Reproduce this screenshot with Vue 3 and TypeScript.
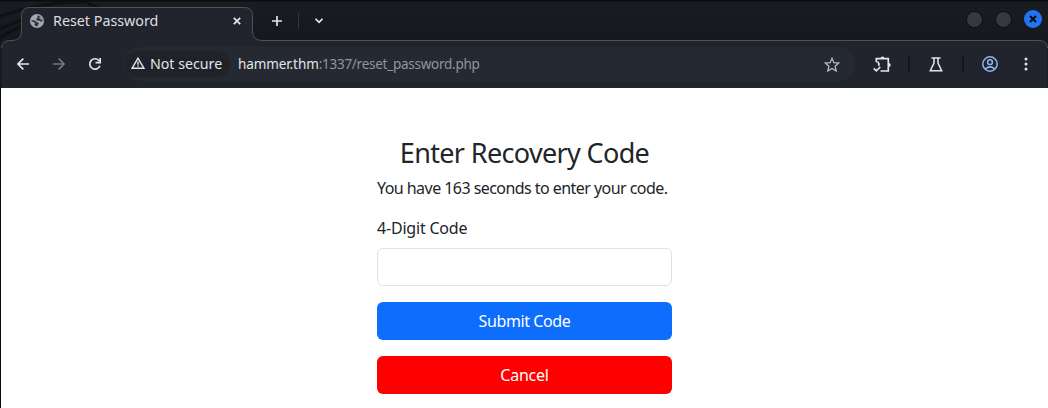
<script setup lang="ts">
import { ref } from 'vue'

const seconds = ref(163)
const code = ref('')
</script>

<template>
  <div class="window">
    <header class="browser">
      <svg class="frame" width="1048" height="88" viewBox="0 0 1048 88" fill="none">
        <path d="M0 38C14 27 18 30 29 22M0 16Q45 1 86 2L100 9M0 29L23 19" stroke="#0f1115" stroke-width="3" />
        <path d="M1.5 88V49Q1.5 40.5 10 40.5H12Q21.5 40.5 21.5 31V15.500Q21.500 7.500 29.500 7.500H244.500Q252.500 7.500 252.500 15.500V31Q252.500 40.500 262 40.500H1039Q1047.500 40.500 1047.500 49V88Z" fill="#21242c" />
        <path d="M1.5 48Q2 40.500 10 40.500H12Q21.500 40.500 21.500 31V15.500Q21.500 7.500 29.500 7.500H244.500Q252.500 7.500 252.500 15.500V31Q252.500 40.500 262 40.500H1039Q1047 40.500 1047.500 48" stroke="#505257" />
      </svg>
      <div class="tabs">
        <svg class="globe" width="14" height="14" viewBox="0 0 14 14">
          <circle cx="7" cy="7" r="7" fill="#a2a8b1" />
          <path d="M7.300 1.500Q10.500 1.500 12.300 5L12.500 7.200 11 7.800 9.500 6.800 7.300 6.800 6 5.200 7.600 3.800ZM1.500 6.300L4 6.300 7.200 8.300 9 9.200 8.300 10.500 7 12.500Q4.500 12.200 4.300 10.500L5.300 9.500 3.700 8 1.500 7.500Z" fill="#30343c" />
          <path d="M9.500 3.200l2.300 2.300" stroke="#a2a8b1" stroke-width="1.300" />
        </svg>
        <span class="tab-title">Reset Password</span>
        <svg class="close" width="8" height="8" viewBox="0 0 8 8"><path d="M.8.8l6.400 6.400M7.200.8L.8 7.200" /></svg>
        <svg class="plus" width="10" height="10" viewBox="0 0 10 10"><path d="M5 0v10M0 5h10" /></svg>
        <i class="tab-divider"></i>
        <svg class="chevron" width="8" height="6" viewBox="0 0 8 6"><path d="M.5.8L4 4.300 7.500.8" /></svg>
        <div class="controls">
          <i class="control"></i><i class="control"></i>
          <i class="control quit"><svg width="8" height="8" viewBox="0 0 8 8"><path d="M1 1l6 6M7 1L1 7" /></svg></i>
        </div>
      </div>
      <div class="toolbar">
        <svg class="back" width="12" height="12" viewBox="0 0 12 12"><path d="M12 6H1M6.300.7L1 6l5.300 5.300" /></svg>
        <svg class="forward" width="12" height="12" viewBox="0 0 12 12"><path d="M0 6h11M5.700.7L11 6l-5.300 5.300" /></svg>
        <svg class="reload" width="14" height="14" viewBox="0 0 14 14"><path d="M11.900 8.700A5.200 5.200 0 1 1 11.300 4M12.200 1v4.700H7.500" /></svg>
        <div class="address">
          <div class="security">
            <svg width="14" height="12" viewBox="0 0 14 12"><path d="M7 1.200L1.200 11.200h11.600zM7 4.500v3.200M7 8.500v1.300" /></svg>
            <span>Not secure</span>
          </div>
          <span class="url"><b>hammer.thm</b>:1337/reset_password.php</span>
          <svg class="star" width="16" height="15" viewBox="0 0 16 15"><path d="M8 1.300l1.900 4.400 4.800.4-3.600 3.200 1.100 4.600L8 11.400l-4.200 2.500 1.100-4.600-3.600-3.200 4.800-.4z" /></svg>
        </div>
        <svg class="extension" width="18" height="17" viewBox="0 0 18 17"><path d="M3.300 6V2.700h12V15H7.500M3.300 5.500C6 6 6.500 8.500 5.500 10M.8 12.300l2.500 2.500L7.300 11" /><path d="M7.500 2.500a2 2 0 0 1 4 0zM15.700 7a2 2 0 0 1 0 4z" fill="#e4e5e7" stroke="none" /></svg>
        <i class="divider"></i>
        <svg class="flask" width="14" height="15" viewBox="0 0 14 15"><path d="M2.500 1h9M5 1v5L1.300 13.700h11.400L9 6V1" /></svg>
        <i class="divider second"></i>
        <svg class="profile" width="16" height="16" viewBox="0 0 16 16"><circle cx="8" cy="8" r="7.200" /><circle cx="8" cy="6.200" r="2.400" /><path d="M3.300 13Q8 8.800 12.700 13" /></svg>
        <svg class="menu" width="4" height="14" viewBox="0 0 4 14"><circle cx="2" cy="2" r="1.500" /><circle cx="2" cy="7" r="1.500" /><circle cx="2" cy="12" r="1.500" /></svg>
      </div>
    </header>
    <main>
      <form @submit.prevent>
        <h1>Enter Recovery Code</h1>
        <p>You have {{ seconds }} seconds to enter your code.</p>
        <label for="code">4-Digit Code</label>
        <input id="code" v-model="code" type="text" />
        <button class="submit" type="submit">Submit Code</button>
        <button class="cancel" type="button">Cancel</button>
      </form>
    </main>
  </div>
</template>

<style>
body { margin: 0; background: #fff; overflow: hidden; }
</style>

<style scoped>
* { box-sizing: border-box; }
.window { width: 1048px; height: 408px; font-family: "Noto Sans", sans-serif; color: #212529; background: #fff; border-left: 1px solid #08090c; }
.browser { height: 88px; margin-left: -1px; position: relative; background: linear-gradient(#0a0c10 0, #0a0c10 1px, #191c21 2px, #15181c 41px); border-bottom: 1px solid #08090c; }
.frame { position: absolute; left: 0; top: 0; }
svg { display: block; flex: none; fill: none; stroke: #e4e5e7; stroke-width: 1.7; }
.frame, .globe { stroke: none; stroke-width: 1; }
.tabs { position: relative; height: 41px; display: flex; align-items: center; padding-left: 30px; white-space: nowrap; }
.tab-title { margin-left: 9px; width: 106px; color: #dedfe1; font-size: 14.3px; line-height: 20px; }
.close { margin-left: 74px; }
.plus { margin-left: 31px; }
.tab-divider { width: 1px; height: 16px; background: #33363c; margin-left: 16px; }
.chevron { margin-left: 16px; }
.controls { margin-left: auto; display: flex; align-items: center; gap: 12px; padding: 0 6px 3px 0; }
.control { width: 17px; height: 17px; border-radius: 50%; background: #353944; border: 1px solid #090b0f; }
.control.quit { width: 18px; height: 18px; background: #2374f5; border: 0; display: grid; place-items: center; margin-left: 0; }
.quit svg { stroke: #080b12; stroke-width: 2; }
.toolbar { position: relative; display: flex; align-items: center; height: 46px; padding-left: 17px; }
.forward { margin-left: 24px; stroke: #74777c; }
.reload { margin-left: 23px; }
.address { margin-left: 22px; width: 731px; height: 34px; border-radius: 17px; background: #252932; display: flex; align-items: center; white-space: nowrap; }
.security { width: 105px; height: 26px; border-radius: 13px; background: #1f2228; margin-left: 1px; padding: 0 0 2px 6px; display: flex; align-items: center; font-size: 14.2px; color: #e4e5e7; }
.security svg { stroke-width: 1.4; }
.security span { margin-left: 5px; }
.url { margin-left: 8px; color: #92959b; font-size: 13.5px; letter-spacing: -.26px; }
.url b { font-weight: 400; color: #e4e5e7; letter-spacing: -.1px; }
.star { margin-left: auto; margin-right: 15px; stroke: #b7babf; stroke-width: 1.3; }
.extension { margin-left: 18px; }
.divider { width: 2px; height: 16px; background: #15171c; margin-left: 17px; }
.flask { margin-left: 19px; stroke-width: 1.5; }
.divider.second { margin-left: 19px; }
.profile { margin-left: 18px; stroke: #8eb4f5; stroke-width: 1.5; }
.menu { margin-left: 26px; fill: #e4e5e7; stroke: none; }
form { width: 295px; margin-left: 376px; padding-top: 48px; }
h1 { margin: 0; font-size: 27px; line-height: 34px; font-weight: 400; text-align: center; white-space: nowrap; letter-spacing: -.65px; }
p { margin: 6px 0 16px; font-size: 16px; line-height: 24px; white-space: nowrap; letter-spacing: -.55px; }
label { display: block; font-size: 16px; line-height: 24px; margin-bottom: 8px; letter-spacing: -.2px; }
input { display: block; width: 295px; height: 38px; border: 1px solid #dee2e6; border-radius: 6px; padding: 6px 12px; margin: 0 0 16px; outline: none; font: inherit; }
button { display: block; width: 100%; height: 38px; border: 0; border-radius: 6px; padding: 0; margin: 0 0 16px; color: #fff; font: 16px/24px "Noto Sans", sans-serif; }
.submit { background: #0d6efd; letter-spacing: -.4px; }
.cancel { background: #f00; letter-spacing: -.25px; }
</style>
